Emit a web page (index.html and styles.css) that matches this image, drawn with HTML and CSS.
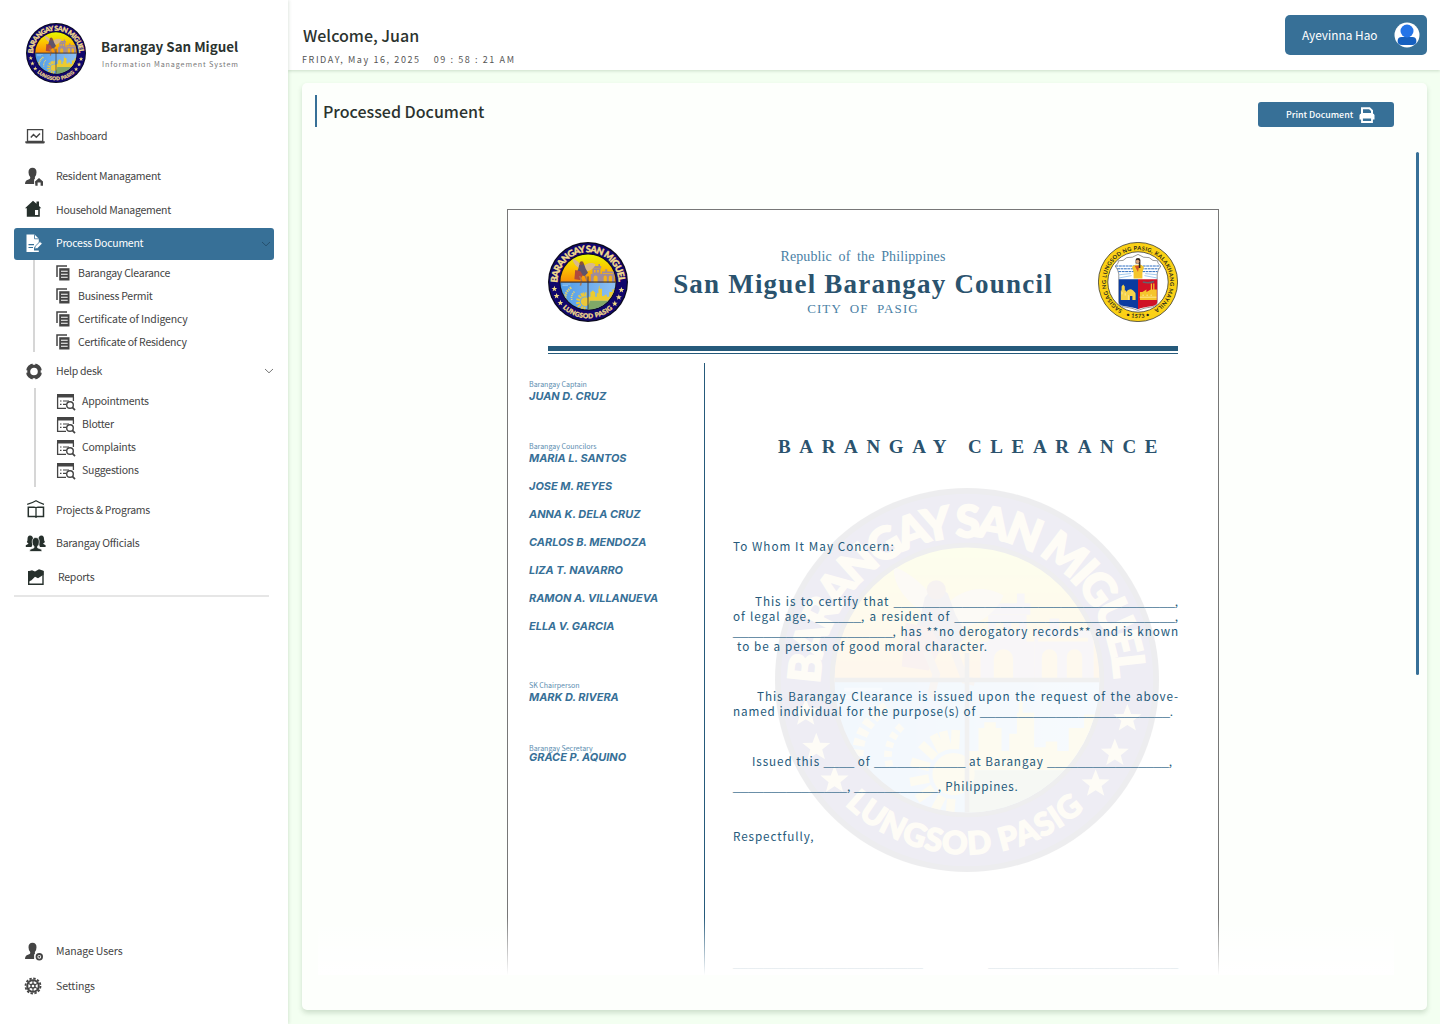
FILE: index.html
```html
<!DOCTYPE html>
<html lang="en">
<head>
<meta charset="utf-8">
<title>Barangay San Miguel – Processed Document</title>
<link rel="stylesheet" href="styles.css">
</head>
<body>
<svg class="defs" width="0" height="0" aria-hidden="true">
  <defs>
    <linearGradient id="sky" x1="0" y1="0" x2="0" y2="1"><stop offset="0" stop-color="#e6fa00"/><stop offset=".5" stop-color="#fcc400"/><stop offset="1" stop-color="#f98a08"/></linearGradient>
    <linearGradient id="sea" x1="0" y1="0" x2="1" y2="0"><stop offset="0" stop-color="#4e9be8"/><stop offset="1" stop-color="#8fc0f2"/></linearGradient>
    <path id="arcTop" d="M23.5 102A76.5 76.5 0 0 1 176.500 102"/>
    <path id="arcLow" d="M36.500 165A91 91 0 0 0 163.500 165"/>
    <path id="arcPasig" d="M61.200 170A80 80 0 1 1 138.800 170"/>
    <path id="arcYear" d="M70 185A91 91 0 0 0 130 185"/>
    <path id="star" d="M0-7.500 2-2.300 7.300-2.200 3.100 1.200 4.500 6.300 0 3.400-4.500 6.300-3.100 1.200-7.300-2.200-2-2.300Z"/>
    <clipPath id="disc"><circle cx="100" cy="100" r="69"/></clipPath>
    <symbol id="seal" viewBox="0 0 200 200">
      <circle cx="100" cy="100" r="100" fill="#0a0a1c"/>
      <circle cx="100" cy="100" r="97" fill="#10066c"/>
      <circle cx="100" cy="100" r="71.500" fill="#10101c"/>
      <g clip-path="url(#disc)">
        <rect x="30" y="30" width="140" height="71" fill="url(#sky)"/>
        <rect x="30" y="101" width="140" height="70" fill="url(#sea)"/>
        <path d="M100 147H170V170H100Z" fill="#80a868"/>
        <path d="M100 147V137h6v-12h3v-3h6v3h3v12h4V128h4V117h1V112l1-4 1 4v5h6v18h6V132h6v5h6v-12h8v-7h10v29Z" fill="#eccb30"/>
        <g fill="#a08c9c">
          <path d="M108 60h4v-5h4v5h10v-5h4v5h3v6h-25Z"/>
          <path d="M111 66h20v14h-20ZM107 80h28v21h-28Z"/>
          <path d="M135 74h8v-6h5v6h18v27h-31Z"/>
        </g>
        <path d="M114 101V89a5 5 0 0 1 10 0v12ZM139 101V88a4 4 0 0 1 8 0v13ZM152 101V88a4 4 0 0 1 8 0v13ZM115 70h4v6h-4ZM123 70h4v6h-4ZM137 78h26v2h-26Z" fill="#f5b21a"/>
        <path d="M79 66C66 58 61 48 62 41c8 3 17 10 24 21ZM86 64c12-14 24-13 33-8-5 12-18 18-31 18Z" fill="#d9b98a"/>
        <path d="M78 57q6-8 12-2l4 11 6 11-8 8-12-2-9-5 5-12Z" fill="#5e536b"/>
        <path d="M68 70l13 3 6 10-7 12-14-2Z" fill="#b04a3c"/>
        <path d="M79 85l5 12-3 12M93 84l6 16 5 1" fill="none" stroke="#a87858" stroke-width="4"/>
        <circle cx="84" cy="53" r="5" fill="#8a5238"/>
        <circle cx="93" cy="149" r="11" fill="#ecc83a"/>
        <path d="M93 149 68 126M93 149 76 116M93 149 84 112M93 149 95 110M93 149 62 140M93 149 60 155M93 149 64 169M93 149 77 180M93 149 90 182" stroke="#ecc83a" stroke-width="4.500" stroke-dasharray="0 13 10 60"/>
        <path d="M58 114Q38 128 45 149T62 168" fill="none" stroke="#e8d36c" stroke-width="6" stroke-dasharray="3.500 2"/>
        <path d="M66 124Q56 134 60 146" fill="none" stroke="#e8d36c" stroke-width="4" stroke-dasharray="3 2"/>
        <path d="M36 105h20M36 109h14" stroke="#9dcbf2" stroke-width="2"/>
        <path d="M30 100h140" stroke="#2c2c34" stroke-width="2.400"/>
        <path d="M100 86v85" stroke="#3a3a42" stroke-width="2.400"/>
      </g>
      <g fill="#f2dc86">
        <use href="#star" x="16" y="117"/><use href="#star" x="21.500" y="135"/><use href="#star" x="31" y="152"/>
        <use href="#star" x="183.500" y="120"/><use href="#star" x="177" y="138"/><use href="#star" x="167" y="154"/>
      </g>
      <text class="seal-top" textLength="238"><textPath href="#arcTop" textLength="238">BARANGAY SAN MIGUEL</textPath></text>
      <text class="seal-low" textLength="138"><textPath href="#arcLow" textLength="138">LUNGSOD PASIG</textPath></text>
    </symbol>
    <symbol id="pasig" viewBox="0 0 200 200">
      <circle cx="100" cy="100" r="99" fill="#fbd116" stroke="#3a3a30" stroke-width="2"/>
      <circle cx="100" cy="100" r="75.500" fill="#fff" stroke="#3a3a30" stroke-width="2"/>
      <path d="M43 60Q53 53 51 47q13 2 21-8 14 2 28-8 14 10 28 8 8 10 21 8-2 6 8 13-8 10-9 20v70q0 9-12 12-24 3-36 9-12-6-36-9-12-3-12-12V80q-1-10-9-20Z" fill="#fff" stroke="#555" stroke-width="1.500"/>
      <path d="M44 60h112M48 67h104M51 74h98" stroke="#2f6fc0" stroke-width="2.500" stroke-dasharray="7 1.500"/>
      <path d="M52 82l30-3M52 90l32-6M148 82l-30-3M148 90l-32-6" stroke="#8cbde8" stroke-width="2"/>
      <path d="M52 93h48v75q-10-5-36-8-12-2-12-10Z" fill="#0a3ba0"/>
      <path d="M148 93h-48v75q10-5 36-8 12-2 12-10Z" fill="#cf1126"/>
      <path d="M57 145v-24h2v-10l4-5 4 5v10h3v4q8-11 18-4 6 4 6 12v12h-8v-10h-6v10Z" fill="#f5d24a"/>
      <path d="M105 145v-20h6l10-6v6l11-6v-15h3v15h3v-15h3v15h6v26Z" fill="#f5c52c"/>
      <path d="M60 125v6M68 128v6M76 133v12M111 133h4M121 133h4M131 133h4M104 138h42" stroke="#fff0a8" stroke-width="2"/>
      <path d="M112 100q15 4 28-1" fill="none" stroke="#65636b" stroke-width="4"/>
      <path d="M89 91V76l-4-14 8-5h14l8 5-4 14 0 15Z" fill="#f5c52c"/>
      <path d="M92 60l8 15 3-16" fill="#d6522a"/>
      <path d="M94 54V45q0-5 6-5t6 5v20h-4V54Z" fill="#302420"/><circle cx="99" cy="49" r="4.500" fill="#dba37c"/>
      <text class="pasig-text" textLength="419"><textPath href="#arcPasig" textLength="419">SAGISAG NG LUNGSOD NG PASIG, KALAKHANG MAYNILA</textPath></text>
      <text class="pasig-text" textLength="60"><textPath href="#arcYear" textLength="60">• 1573 •</textPath></text>
    </symbol>
    <symbol id="copy" viewBox="0 0 14 16"><path d="M1 12V1H11" fill="none" stroke="currentColor" stroke-width="1.500"/><path d="M3.200 3.200H13.500V15.500H3.200Z" fill="currentColor"/><path d="M5 6.300h6.700M5 9.300h6.700M5 12.300h6.700" stroke="#fff" stroke-width="1.100"/></symbol>
    <symbol id="listsearch" viewBox="0 0 20 18"><path d="M1 1H18V4.500H1Z" fill="currentColor"/><path d="M1.600 4V15.400H10M17.400 4V8" fill="none" stroke="currentColor" stroke-width="1.300"/><path d="M4 8h1.500M7 8h6M4 11.300h1.500M7 11.300h3" stroke="currentColor" stroke-width="1.200"/><circle cx="14" cy="12" r="3.300" fill="#fff" stroke="currentColor" stroke-width="1.400"/><path d="M16.400 14.400 19 17.200" stroke="currentColor" stroke-width="1.700"/></symbol>
    <symbol id="chev" viewBox="0 0 10 6"><path d="M1 1 5 4.800 9 1" fill="none" stroke="currentColor" stroke-width="1"/></symbol>
  </defs>
</svg>
<div class="app">
  <aside class="sidebar">
    <div class="brand">
      <svg class="brand-seal"><use href="#seal"/></svg>
      <div><div class="brand-name">Barangay San Miguel</div><div class="brand-sub">Information Management System</div></div>
    </div>
    <nav class="nav">
      <a class="item gap8"><svg class="ico" viewBox="0 0 20 20"><path d="M2.500 3.700H17.700V15.500H2.500Z" fill="none" stroke="currentColor" stroke-width="1.300"/><path d="M.3 15.300H19.700V16.700Q19.500 17.500 18.500 17.500H1.500Q.5 17.500 .3 16.700Z" fill="currentColor"/><path d="M5.800 11.500 8.500 8.500 11.300 11.300 15 7.500" fill="none" stroke="currentColor" stroke-width="1.400"/></svg><span>Dashboard</span></a>
      <a class="item gap2"><svg class="ico" viewBox="0 0 20 20"><path d="M7.500 1.800q4 0 4 4.500 0 3-1.600 4.700v2.300h-.8v4.700H0q0-3.400 3-4.200 2.200-.7 2.200-1.600V11Q3.500 9.300 3.500 6.300 3.500 1.800 7.500 1.800Z" fill="currentColor"/><path d="M10 15.400 14 12l4 3.400V19.800H15.600V16.500H12.600V19.800H10.400Z" fill="currentColor"/></svg><span>Resident Managament</span></a>
      <a class="item gap2 ink"><svg class="ico" viewBox="0 0 20 20"><path d="M0 8.200 8 .8 11.500 3.800V1.500H14V6L16.300 8.200H14.800V16.800H1.800V8.200Z" fill="currentColor"/><path d="M10 10h3.200v5H10Z" fill="#fff"/></svg><span>Household Management</span></a>
      <a class="item active"><svg class="ico" viewBox="0 0 20 20"><path d="M1.500 .5H9.500L13.800 4.800V9L9 14V16.500H13.800V18H1.500Z" fill="#fff"/><path d="M9.500 .5V4.800H13.800" fill="none" stroke="#377097" stroke-width=".8"/><path d="M3.500 10.700H9M3.500 13.500H8" stroke="#377097" stroke-width="1.200"/><path d="M9.700 15 10.200 12.300 15 7.500 17.200 9.700 12.400 14.500Z" fill="#fff" stroke="#377097" stroke-width=".8"/></svg><span>Process Document</span><svg class="chev dark"><use href="#chev"/></svg></a>
      <div class="group docs">
        <a class="sub"><svg class="copy"><use href="#copy"/></svg><span>Barangay Clearance</span></a>
        <a class="sub"><svg class="copy"><use href="#copy"/></svg><span>Business Permit</span></a>
        <a class="sub"><svg class="copy"><use href="#copy"/></svg><span class="wide">Certificate of Indigency</span></a>
        <a class="sub"><svg class="copy"><use href="#copy"/></svg><span>Certificate of Residency</span></a>
      </div>
      <a class="item help"><svg class="ico" viewBox="0 0 20 20"><circle cx="9" cy="10.500" r="5.900" fill="none" stroke="currentColor" stroke-width="4.200"/><path d="M9 2V3.700M9 17.300V19M.7 10.500H2.300M15.700 10.500H17.500" stroke="#fff" stroke-width="2.600"/></svg><span>Help desk</span><svg class="chev"><use href="#chev"/></svg></a>
      <div class="group desk">
        <a class="sub"><svg class="list"><use href="#listsearch"/></svg><span>Appointments</span></a>
        <a class="sub"><svg class="list"><use href="#listsearch"/></svg><span>Blotter</span></a>
        <a class="sub"><svg class="list"><use href="#listsearch"/></svg><span>Complaints</span></a>
        <a class="sub"><svg class="list"><use href="#listsearch"/></svg><span>Suggestions</span></a>
      </div>
      <a class="item gap1 ink"><svg class="ico" viewBox="0 0 20 20"><path d="M2.200 4.300Q7 3.200 11 .8 15 3.200 19 4.300" fill="none" stroke="currentColor" stroke-width="1.200"/><path d="M3.300 7.200H9Q11 7.200 11 8 11 7.200 13 7.200H18.500V16.500H3.300Z" fill="none" stroke="currentColor" stroke-width="1.500"/><path d="M11 7.500V18" stroke="currentColor" stroke-width="1.300"/></svg><span>Projects &amp; Programs</span></a>
      <a class="item gap2 ink"><svg class="ico" viewBox="0 0 20 20"><path d="M5 2.500Q8 2.500 8 6V10L6.500 14H.8V12.300L3.500 10.800 1.800 9Q2.700 8 2.500 6 2.500 2.500 5 2.500ZM16.500 2.500Q19 2.500 19 6 19 8 20 9L18 10.800 20.600 12.300V14H15L13.500 10V6Q13.500 2.500 16.500 2.500Z" fill="currentColor"/><path d="M10.700 4.500Q14.300 4.500 14.300 9 14.300 12 12.500 13.500V14.800L16.800 16.500V18.500H4.800V16.500L9 14.800V13.500Q7.200 12 7.200 9 7.200 4.500 10.700 4.500Z" fill="currentColor" stroke="#fff" stroke-width=".7"/></svg><span>Barangay Officials</span></a>
      <a class="item reports ink"><svg class="ico" viewBox="0 0 20 20"><path d="M3.700 4V17.300H18V4" fill="none" stroke="currentColor" stroke-width="1.400"/><path d="M3.500 4.200 7 3.200 10 4.400 14 2.200 18.500 3.700V7.700L13 11.200 10 9.700 6.500 13.200 3.500 14.700Z" fill="currentColor"/></svg><span>Reports</span></a>
      <hr class="rule">
    </nav>
    <nav class="foot">
      <a class="item gap3"><svg class="ico" viewBox="0 0 20 20"><path d="M7.500 1.800q4 0 4 4.500 0 3-1.600 4.700v2.300h-.8v4.700H0q0-3.400 3-4.200 2.200-.7 2.200-1.600V11Q3.500 9.300 3.500 6.300 3.500 1.800 7.500 1.800Z" fill="currentColor"/><circle cx="14.300" cy="15.800" r="2.800" fill="#fff" stroke="currentColor" stroke-width="1.800"/><circle cx="14.300" cy="15.800" r="1" fill="currentColor"/></svg><span class="wide">Manage Users</span></a>
      <a class="item"><svg class="ico" viewBox="0 0 20 20"><circle cx="8" cy="10" r="7.500" fill="none" stroke="currentColor" stroke-width="1.800" stroke-dasharray="2.400 1.530"/><circle cx="8" cy="10" r="5.800" fill="none" stroke="currentColor" stroke-width="2"/><circle cx="8" cy="10" r="2" fill="none" stroke="currentColor" stroke-width="1.300"/><path d="M8 4V8M8 12V16M2.800 7 6.300 9M9.700 11 13.200 13M2.800 13 6.300 11M9.700 9 13.200 7" stroke="currentColor" stroke-width="1.200"/></svg><span class="wide">Settings</span></a>
    </nav>
  </aside>
  <div class="page">
    <header class="topbar">
      <div class="hello"><div class="welcome">Welcome, Juan</div><div class="clock"><span class="date">FRIDAY, May 16, 2025</span><span class="time">09 : 58 : 21 AM</span></div></div>
      <div class="user"><span>Ayevinna Hao</span><svg class="avatar" viewBox="0 0 26 26"><circle cx="13" cy="13" r="12.500" fill="#fff"/><rect x="3.600" y="15" width="18.800" height="8" rx="4" fill="#1660bf"/><circle cx="13" cy="9" r="6.500" fill="#2474e8"/></svg></div>
    </header>
    <main class="card">
      <div class="card-head">
        <h1>Processed Document</h1>
        <button class="print"><span>Print Document</span><svg viewBox="0 0 16 16"><path d="M3 1.200H10.500L13 3.600V7H3Z" fill="none" stroke="#fff" stroke-width="2"/><path d="M.5 8.500Q.5 6.500 2.500 6.500H13.500Q15.500 6.500 15.500 8.500V12.500H.5Z" fill="#fff"/><path d="M3 10.500H13V15H3Z" fill="#377097" stroke="#fff" stroke-width="1.800"/></svg></button>
      </div>
      <div class="viewer">
        <article class="paper">
          <header class="letterhead">
            <svg class="crest"><use href="#seal"/></svg>
            <div class="lh-text"><div class="republic">Republic of the Philippines</div><div class="council">San Miguel Barangay Council</div><div class="city">CITY OF PASIG</div></div>
            <svg class="crest"><use href="#pasig"/></svg>
          </header>
          <div class="double-rule"></div>
          <div class="cols">
            <section class="officials">
              <div class="role">Barangay Captain</div><div class="name">JUAN D. CRUZ</div>
              <div class="role r2">Barangay Councilors</div><div class="name">MARIA L. SANTOS</div>
              <div class="name n">JOSE M. REYES</div><div class="name n">ANNA K. DELA CRUZ</div><div class="name n">CARLOS B. MENDOZA</div><div class="name n">LIZA T. NAVARRO</div><div class="name n">RAMON A. VILLANUEVA</div><div class="name n">ELLA V. GARCIA</div>
              <div class="role r3">SK Chairperson</div><div class="name">MARK D. RIVERA</div>
              <div class="role r4">Barangay Secretary</div><div class="name tight">GRACE P. AQUINO</div>
            </section>
            <section class="letter">
              <svg class="watermark"><use href="#seal"/></svg>
              <h2>BARANGAY CLEARANCE</h2>
              <p class="to">To Whom It May Concern:</p>
              <div class="para p1">
                <p class="ln l1">This is to certify that <i>_____________________________________</i>,</p>
                <p class="ln">of legal age, <i>______</i>, a resident of <i>_____________________________</i>,</p>
                <p class="ln"><i>_____________________</i>, has **no derogatory records** and is known</p>
                <p class="ln l4">to be a person of good moral character.</p>
              </div>
              <div class="para p2">
                <p class="ln l5">This Barangay Clearance is issued upon the request of the above-</p>
                <p class="ln l6">named individual for the purpose(s) of <i>_________________________</i>.</p>
              </div>
              <div class="para p3">
                <p class="ln l7">Issued this <i>____</i> of <i>____________</i> at Barangay <i>________________</i>,</p>
                <p class="ln l8"><i>_______________</i>, <i>___________</i>, Philippines.</p>
              </div>
              <p class="bye">Respectfully,</p>
              <div class="signs"><i>_________________________</i><i>_________________________</i></div>
            </section>
          </div>
        </article>
        <div class="thumb"></div>
        <div class="fade"></div>
      </div>
    </main>
  </div>
</div>
</body>
</html>
```
FILE: styles.css
```css
* { box-sizing: border-box; }
body { margin: 0; font-family: "Noto Sans CJK JP", "Noto Sans", sans-serif; color: #2b332f; background: #f3fff1; }
p, h1, h2 { margin: 0; font-weight: 400; }
i { font-style: normal; }
.defs { position: absolute; }
.app { display: flex; width: 1440px; height: 1024px; overflow: hidden; }

/* Sidebar */
.sidebar { width: 288px; flex: none; background: #fff; display: flex; flex-direction: column; box-shadow: 0 0 4px rgba(40, 80, 40, .22); z-index: 2; }
.brand { display: flex; padding: 23px 0 0 26px; height: 120px; }
.brand-seal { width: 60px; height: 60px; margin-right: 15px; }
.brand-name { font-size: 13.400px; font-weight: 700; line-height: 20px; margin-top: 13px; white-space: nowrap; }
.brand-sub { font-size: 7.200px; line-height: 12px; letter-spacing: .87px; color: #777; margin: 2px 0 0 1px; white-space: nowrap; }
.nav, .foot { color: #444; font-size: 10.500px; letter-spacing: -.25px; padding: 0 14px; }
.wide { letter-spacing: -.12px; }
.foot { margin-top: auto; padding-bottom: 22px; }
.item { display: flex; align-items: center; height: 32px; padding-left: 11px; border-radius: 3px; }
.item span, .sub span { line-height: 16px; white-space: nowrap; }
.sub span, .active span { margin-bottom: 2px; }
.ico { width: 20px; height: 20px; margin-right: 11px; flex: none; overflow: visible; }
.ink .ico { color: #26302c; }
.gap1 { margin: 7px 0 1px; }
.gap2 { margin-bottom: 2px; }
.gap3 { margin-bottom: 3px; }
.gap8 { margin-bottom: 8px; }
.active { background: #377097; color: #fff; }
.chev { width: 10px; height: 6px; margin-left: auto; color: #777; }
.item .dark { margin-right: 3px; color: #26506e; }
.help .chev { margin-right: 0; }
.group { margin-left: 19px; border-left: 2px solid #d6d6d6; }
.docs { height: 92px; padding: 2px 0 0 22px; }
.desk { height: 99px; padding: 2px 0 0 21px; margin-left: 20px; }
.sub { display: flex; align-items: center; height: 23px; }
.copy { width: 14px; height: 16px; margin: 0 8px 1px 0; }
.docs .sub { margin-left: -1px; }
.list { width: 20px; height: 18px; margin: 0 6px 0 -1px; }
.help { margin: 3px 0 1px; }
.reports span { margin-left: 2px; }
.reports { margin-bottom: 2px; }
.rule { border: 0; height: 2px; background: #e6e6e6; margin: 0 5px 0 0; }

/* Header bar */
.page { flex: 1; display: flex; flex-direction: column; }
.topbar { height: 70px; background: #fff; display: flex; justify-content: space-between; padding: 15px 13px 0 15px; box-shadow: 0 1px 3px rgba(40, 80, 40, .2); }
.welcome { font-size: 16px; font-weight: 500; line-height: 24px; margin-top: 8px; }
.clock { font-size: 9px; line-height: 12px; margin: 7px 0 0 -1px; color: #555; letter-spacing: 1.6px; display: flex; gap: 13px; }
.user { width: 142px; height: 40px; background: #377097; color: #fff; border-radius: 5px; display: flex; align-items: center; justify-content: space-between; padding: 0 7px 0 17px; font-size: 11.850px; }
.user span { margin-bottom: 1px; }
.avatar { width: 26px; height: 26px; }

/* Card */
.card { flex: 1; margin: 13px 13px 14px 14px; background: #fdfffc; border-radius: 5px; box-shadow: 0 3px 5px rgba(40, 80, 40, .18); display: flex; flex-direction: column; }
.card-head { display: flex; justify-content: space-between; align-items: flex-start; padding: 12px 33px 0 13px; height: 44px; }
h1 { font-size: 16px; font-weight: 500; line-height: 32px; border-left: 2px solid #377097; padding-left: 6px; }
.print { margin-top: 7px; width: 136px; height: 25px; border: 0; border-radius: 3px; background: #377097; color: #fff; font: 500 8.900px "Noto Sans CJK JP", sans-serif; display: flex; align-items: center; gap: 6px; padding: 0 0 0 28px; white-space: nowrap; }
.print svg { width: 16px; height: 16px; }
.viewer { position: relative; flex: none; height: 848px; display: flex; align-items: flex-start; justify-content: space-between; overflow: hidden; padding: 0 8px 0 205px; }
.thumb { width: 3px; height: 523px; border-radius: 2px; background: #377097; margin-top: 25px; }
.fade { position: absolute; left: 16px; right: 33px; bottom: 0; height: 58px; background: linear-gradient(rgba(255, 255, 255, 0), #fff); }

/* Document */
.paper { width: 712px; height: 1000px; margin-top: 82px; background: #fff; border: 1px solid #777; color: #255a7b; }
.letterhead { display: flex; justify-content: space-between; padding: 32px 40px 0; }
.crest { width: 80px; height: 80px; }
.lh-text { text-align: center; white-space: nowrap; }
.republic, .city { font-family: "Liberation Serif", serif; color: #4a7fa5; font-size: 14px; line-height: 18px; }
.republic { margin-top: 6px; word-spacing: 3px; letter-spacing: .12px; }
.council { font: 700 27px/34px "Liberation Serif", serif; color: #2b536e; letter-spacing: 1.2px; margin-top: 1px; }
.city { letter-spacing: 1.1px; word-spacing: 4px; font-size: 13px; margin-top: -1px; }
.double-rule { margin: 24px 40px 0; height: 8px; border-top: 5px solid #255a7b; border-bottom: 1px solid #255a7b; }
.cols { display: flex; margin-top: 9px; height: 640px; }
.officials { flex: none; width: 197px; padding: 16px 0 0 21px; border-right: 1px solid #255a7b; color: #377097; white-space: nowrap; }
.role { font-size: 7.050px; line-height: 10px; color: #5b8db0; }
.name { font: italic 700 10.940px/14px Inter, sans-serif; }
.name.n { margin-top: 14px; }
.r2 { margin-top: 38px; }
.r3 { margin-top: 47px; }
.r4 { margin-top: 39px; }
.tight { margin-top: -3.500px; }
.letter { position: relative; flex: 1; padding: 0 39px 0 28px; font: 11.700px/15px "Noto Sans CJK JP", sans-serif; letter-spacing: .9px; color: #255a7b; }
.letter > * { position: relative; }
.letter .watermark { position: absolute; left: 70px; top: 125px; width: 384px; height: 384px; opacity: .068; }
h2 { font: 700 19px/24px "Liberation Serif", serif; letter-spacing: 8.650px; color: #2b536e; padding: 72px 0 0 45px; white-space: nowrap; }
.to { margin-top: 79px; white-space: nowrap; letter-spacing: 1.050px; }
.ln { text-align-last: justify; white-space: nowrap; height: 15px; }
.ln i, .signs i { font-family: "Liberation Sans", sans-serif; font-size: 13.670px; letter-spacing: 0; line-height: 12px; }
.ln i { vertical-align: 1px; line-height: 0; color: #5b84a0; }
.p1 { margin-top: 40px; }
.l1 { margin-left: 22px; }
.l4 { margin-left: 4px; width: 251px; }
.p2 { margin-top: 35px; }
.l5 { margin-left: 24px; }
.l6 { width: 441px; }
.p3 { margin-top: 35px; }
.l7 { margin-left: 19px; width: 421px; }
.l8 { margin-top: 10px; width: 285px; letter-spacing: .75px; }
.bye { margin-top: 35px; }
.signs { display: flex; justify-content: space-between; margin: 113px 1px 0 0; }

/* Seal lettering */
.seal-top { font: 900 23px Lato, sans-serif; fill: #f4dd8c; stroke: #f4dd8c; stroke-width: 1; }
.seal-low { font: 900 16.500px Lato, sans-serif; fill: #f4dd8c; stroke: #f4dd8c; stroke-width: .7; }
.pasig-text { font: 700 14px Lato, sans-serif; fill: #26261c; }
```
